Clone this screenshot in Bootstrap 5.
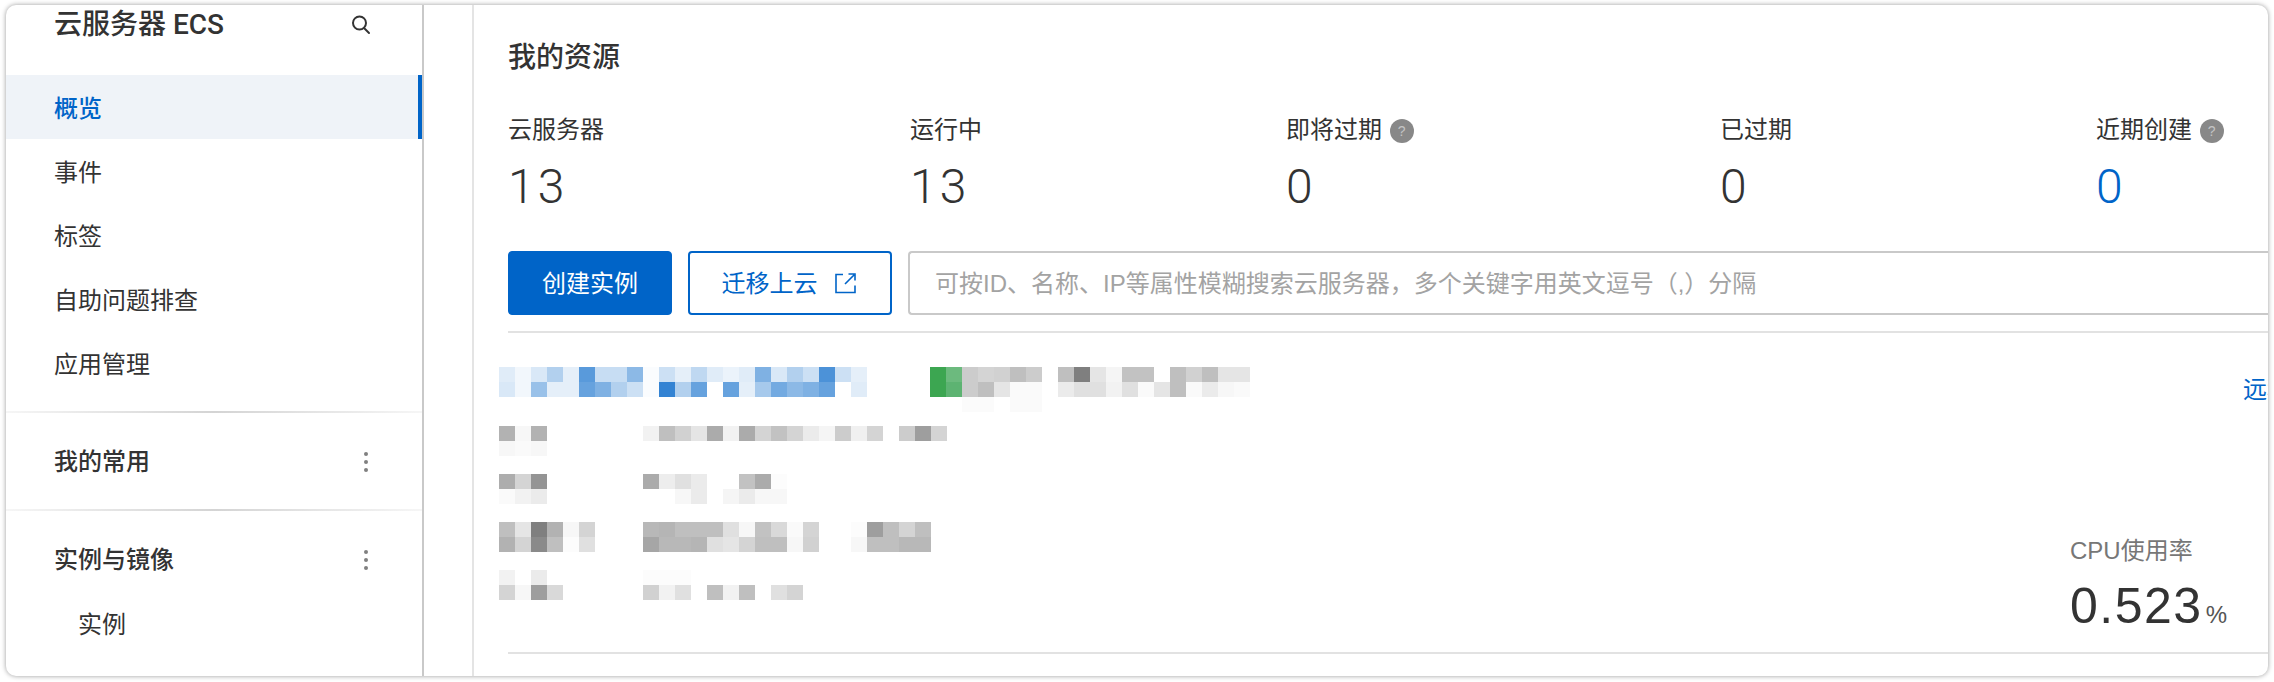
<!DOCTYPE html>
<html lang="zh-CN">
<head>
    <meta charset="UTF-8">
    <meta name="viewport" content="width=device-width, initial-scale=1.0">
    <title>云服务器 ECS</title>
    <link href="https://cdn.jsdelivr.net/npm/bootstrap@5.3.0/dist/css/bootstrap.min.css" rel="stylesheet">
    <style>
        html, body {
            height: 682px;
            overflow: hidden;
            background: #fff;
        }

        body {
            font-family: "Liberation Sans", "Noto Sans CJK SC", sans-serif;
            font-size: 24px;
            color: #333;
        }

        .app-window {
            margin: 5px 6px;
            width: 2262px;
            height: 671px;
            border-radius: 10px;
            overflow: hidden;
            background: #fff;
            box-shadow: 0 0 5px rgba(0, 0, 0, .4);
        }

        /* sidebar */
        .side-panel {
            width: 418px;
            flex: none;
            border-right: 2px solid #c9c9c9;
        }

        .side-title {
            height: 70px;
            padding: 0 51px 0 48px;
            font-family: Roboto, "Noto Sans CJK SC", sans-serif;
            font-size: 28px;
            font-weight: 500;
            line-height: 40px;
        }

        .side-panel .nav-link {
            height: 64px;
            padding: 0 0 0 48px;
            line-height: 67px;
            font-size: 24px;
            color: #333;
        }

        .side-panel .nav-link.active {
            background: #eff3f8;
            border-right: 4px solid #0064c8;
            color: #0064c8;
            font-weight: 500;
        }

        .side-panel .nav-link.sub-link {
            padding-left: 72px;
        }

        .side-group {
            padding: 16px 0;
            border-top: 2px solid;
            border-image: linear-gradient(to right, #f6f6f6, #d4d4d4 50%, #f6f6f6) 1;
        }

        .side-group.first-group {
            margin-top: 16px;
        }

        .group-head {
            height: 64px;
            padding: 0 48px;
            line-height: 67px;
            font-weight: 500;
        }

        .dots-icon {
            margin-right: 6px;
            margin-top: 2px;
        }

        .gutter-col {
            width: 50px;
            flex: none;
            border-right: 2px solid #e4e4e4;
        }

        /* main content */
        .main-col {
            min-width: 0;
            padding-left: 34px;
        }

        .section-title {
            height: 71px;
            padding-top: 31px;
            font-size: 28px;
            font-weight: 500;
            line-height: 43px;
        }

        .stat-grid {
            display: grid;
            grid-template-columns: 402px 376px 434px 376px 1fr;
            margin-top: 36px;
        }

        .stat-label {
            line-height: 35px;
            height: 32px;
            white-space: nowrap;
        }

        .stat-num {
            margin-top: 16px;
            font-family: Roboto, "Liberation Sans", sans-serif;
            font-size: 48px;
            font-weight: 300;
            line-height: 54px;
            letter-spacing: 3px;
        }

        .stat-link {
            color: #0064c8;
        }

        .help-dot {
            width: 24px;
            height: 24px;
            margin-left: 1px;
            background: #888;
            color: #c4c4c4;
            font-size: 14px;
            line-height: 1;
            vertical-align: 2px;
        }

        .tool-row {
            margin-top: 37px;
            gap: 16px;
        }

        .tool-row .btn {
            height: 64px;
            border-radius: 4px;
            font-size: 24px;
            line-height: 1;
            padding: 2px 0 0;
            flex: none;
        }

        .btn-create {
            width: 164px;
            --bs-btn-bg: #0064c8;
            --bs-btn-border-color: #0064c8;
        }

        .btn-move {
            width: 204px;
            gap: 17px;
            border-width: 2px;
            --bs-btn-color: #0064c8;
            --bs-btn-border-color: #0064c8;
        }

        .btn-move svg {
            margin-right: 3px;
            margin-top: -2px;
        }

        .tool-row .form-control {
            height: 64px;
            flex: 1;
            padding: 2px 25px 0;
            border: 2px solid #c9c9c9;
            border-right: 0;
            border-radius: 4px 0 0 4px;
            font-size: 24px;
        }

        .tool-row .form-control::placeholder {
            color: #a3a3a3;
            opacity: 1;
        }

        .rule-line {
            height: 2px;
            background: #e2e2e2;
        }

        .rule-top {
            margin-top: 16px;
        }

        /* blurred instance record */
        .record {
            margin-left: -9px;
            padding-top: 34px;
        }

        .record-head {
            height: 45px;
        }

        .mosaic {
            display: grid;
            grid-auto-rows: 15px;
            grid-auto-columns: 16px;
            flex: none;
            align-self: flex-start;
            filter: blur(.5px);
        }

        .mosaic-wide {
            margin-right: 63px;
        }

        .mosaic-tag {
            margin-right: 16px;
        }

        .remote-link {
            margin-left: auto;
            width: 25px;
            overflow: hidden;
            white-space: nowrap;
            color: #0064c8;
            line-height: 46px;
        }

        .record-body {
            height: 226px;
            margin-top: 14px;
        }

        .mosaic-row {
            height: 30px;
            margin-bottom: 18px;
        }

        .mosaic-left {
            width: 144px;
            flex: none;
        }

        .cpu-box {
            width: 198px;
            flex: none;
            padding-bottom: 7px;
        }

        .cpu-label {
            line-height: 34px;
            height: 32px;
            color: #777;
        }

        .cpu-value {
            margin-top: 10px;
            font-size: 50px;
            line-height: 60px;
            letter-spacing: 1.5px;
            white-space: nowrap;
        }

        .cpu-value span {
            margin-left: 3px;
            font-size: 24px;
            letter-spacing: 0;
            color: #555;
        }
    </style>
</head>
<body>
    <div class="app-window d-flex">
        <aside class="side-panel">
            <div class="side-title d-flex justify-content-between">
                <span>云服务器 ECS</span>
                <svg class="mt-2" width="20" height="22" viewBox="0 0 20 22" fill="none" stroke="#333" stroke-width="2">
                    <circle cx="8.5" cy="10" r="6.5"/>
                    <path d="M13 15l5 5" stroke-linecap="round"/>
                </svg>
            </div>
            <nav class="nav flex-column">
                <a class="nav-link active" href="#">概览</a>
                <a class="nav-link" href="#">事件</a>
                <a class="nav-link" href="#">标签</a>
                <a class="nav-link" href="#">自助问题排查</a>
                <a class="nav-link" href="#">应用管理</a>
            </nav>
            <div class="side-group first-group">
                <div class="group-head d-flex justify-content-between align-items-center">
                    <span>我的常用</span>
                    <svg class="dots-icon" width="4" height="20" viewBox="0 0 4 20" fill="#808080"><circle cx="2" cy="2" r="2"/><circle cx="2" cy="10" r="2"/><circle cx="2" cy="18" r="2"/></svg>
                </div>
            </div>
            <div class="side-group">
                <div class="group-head d-flex justify-content-between align-items-center">
                    <span>实例与镜像</span>
                    <svg class="dots-icon" width="4" height="20" viewBox="0 0 4 20" fill="#808080"><circle cx="2" cy="2" r="2"/><circle cx="2" cy="10" r="2"/><circle cx="2" cy="18" r="2"/></svg>
                </div>
                <a class="nav-link sub-link" href="#">实例</a>
            </div>
        </aside>

        <div class="gutter-col"></div>

        <main class="main-col flex-grow-1">
            <div class="section-title">我的资源</div>

            <div class="stat-grid">
                <div>
                    <div class="stat-label">云服务器</div>
                    <div class="stat-num">13</div>
                </div>
                <div>
                    <div class="stat-label">运行中</div>
                    <div class="stat-num">13</div>
                </div>
                <div>
                    <div class="stat-label">即将过期 <span class="help-dot d-inline-flex rounded-circle align-items-center justify-content-center">?</span></div>
                    <div class="stat-num">0</div>
                </div>
                <div>
                    <div class="stat-label">已过期</div>
                    <div class="stat-num">0</div>
                </div>
                <div>
                    <div class="stat-label">近期创建 <span class="help-dot d-inline-flex rounded-circle align-items-center justify-content-center">?</span></div>
                    <div class="stat-num stat-link">0</div>
                </div>
            </div>

            <div class="tool-row d-flex">
                <button type="button" class="btn btn-primary btn-create">创建实例</button>
                <button type="button" class="btn btn-outline-primary btn-move d-flex align-items-center justify-content-center">
                    迁移上云
                    <svg width="21" height="21" viewBox="0 0 21 21" fill="none" stroke="currentColor" stroke-width="1.6">
                        <path d="M8 1.5H1v18h19v-7"/>
                        <path d="M10 11L19 2M13.5 1h6.5v6.5"/>
                    </svg>
                </button>
                <input type="text" class="form-control" placeholder="可按ID、名称、IP等属性模糊搜索云服务器，多个关键字用英文逗号（,）分隔">
            </div>
            <div class="rule-line rule-top"></div>

            <div class="record">
                <div class="record-head d-flex">
                    <div class="mosaic mosaic-wide" data-tint="0,100,200" data-rows=".12 .05 .15 .3 .1 .65 .22 .22 .45 .02 .2 .1 .25 .12 .08 .12 .5 .15 .3 .2 .7 .2 .1|.15 .05 .4 .1 .1 .6 .5 .3 .2 .02 .8 .3 .6 0 .6 .1 .35 .55 .45 .5 .6 0 .12"></div>
                    <div class="mosaic mosaic-tag" data-tint="0,0,0" data-rows="g1 g2 .2 .17 .18 .25 .2|g1 g3 .2 .25 .1 .02 .02|0 0 .015 .015 0 .02 .02"></div>
                    <div class="mosaic" data-tint="0,0,0" data-rows=".25 .5 .1 .04 .24 .24 0 .25 .18 .25 .1 .1|.08 .12 .12 .05 .12 .02 .1 .25 .02 .08 .03 .02"></div>
                    <div class="remote-link">远程连接</div>
                </div>

                <div class="record-body d-flex justify-content-between align-items-end">
                    <div class="align-self-start">
                        <div class="mosaic-row d-flex">
                            <div class="mosaic-left"><div class="mosaic" data-tint="0,0,0" data-rows=".3 .03 .3|.03 .02 .03"></div></div>
                            <div class="mosaic" data-tint="0,0,0" data-rows=".05 .25 .18 .1 .33 .05 .33 .17 .24 .17 .08 .04 .2 .06 .17 0 .2 .38 .17"></div>
                        </div>
                        <div class="mosaic-row d-flex">
                            <div class="mosaic-left"><div class="mosaic" data-tint="0,0,0" data-rows=".32 .17 .42|.02 .05 .08"></div></div>
                            <div class="mosaic" data-tint="0,0,0" data-rows=".33 .07 .12 .08 0 0 .24 .33 .01|0 0 .03 .08 0 .04 .08 .03 .03"></div>
                        </div>
                        <div class="mosaic-row d-flex">
                            <div class="mosaic-left"><div class="mosaic" data-tint="0,0,0" data-rows=".25 .1 .5 .3 .03 .17|.3 .17 .46 .25 .01 .12"></div></div>
                            <div class="mosaic" data-tint="0,0,0" data-rows=".28 .29 .25 .25 .25 .12 .03 .24 .15 .02 .17 0 0 .01 .38 .25 .17 .25|.35 .28 .28 .29 .12 .1 .17 .25 .25 .03 .18 0 0 .03 .25 .25 .28 .28"></div>
                        </div>
                        <div class="mosaic-row d-flex">
                            <div class="mosaic-left"><div class="mosaic" data-tint="0,0,0" data-rows=".05 0 .08 0|.17 .03 .38 .15"></div></div>
                            <div class="mosaic" data-tint="0,0,0" data-rows=".01 .01 .01 0 0 0 0 0 0 0|.18 .05 .12 0 .25 .05 .25 0 .12 .17"></div>
                        </div>
                    </div>
                    <div class="cpu-box">
                        <div class="cpu-label">CPU使用率</div>
                        <div class="cpu-value">0.523<span>%</span></div>
                    </div>
                </div>
            </div>
            <div class="rule-line"></div>
        </main>
    </div>

    <script>
        // pixelated (redacted) text blocks, one value per cell
        const greens = { g1: '#3ca651', g2: '#6cba7e', g3: '#5db372' };

        document.querySelectorAll('.mosaic').forEach((block) => {
            const tint = block.dataset.tint;
            block.dataset.rows.split('|').forEach((row, rowIndex) => {
                row.split(' ').forEach((value, colIndex) => {
                    const cell = document.createElement('div');
                    cell.style.gridRow = rowIndex + 1;
                    cell.style.gridColumn = colIndex + 1;
                    cell.style.background = greens[value] || `rgba(${tint},${value})`;
                    block.appendChild(cell);
                });
            });
        });
    </script>
    <script src="https://cdn.jsdelivr.net/npm/bootstrap@5.3.0/dist/js/bootstrap.bundle.min.js"></script>
</body>
</html>
